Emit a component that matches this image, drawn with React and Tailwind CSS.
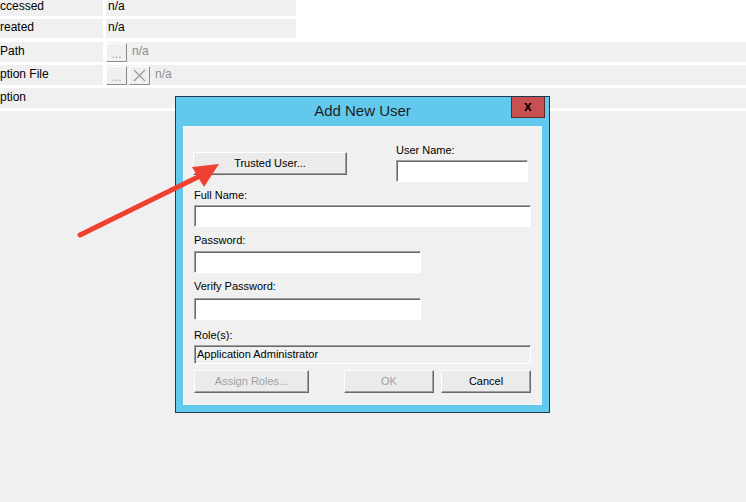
import React from 'react';

const font = { fontFamily: '"Liberation Sans", Arial, sans-serif' };

const SmallBtn = ({ children }) => (
  <div className="w-[21px] h-[19px] flex items-end justify-center bg-[#f0f0f0] border border-t-white border-l-white border-r-[#8c8c8c] border-b-[#8c8c8c] text-[#a0a0a0] text-[12px] leading-[14px]">
    {children}
  </div>
);

const Input = ({ w }) => (
  <div className={`${w} h-[22px] bg-white border border-t-[#a0a0a0] border-l-[#a0a0a0] border-r-white border-b-white shadow-[inset_1px_1px_0_#696969]`}></div>
);

const WinButton = ({ w, disabled, children }) => (
  <div
    className={`${w} h-[23px] flex items-center justify-center bg-[#ebebeb] border border-t-white border-l-white border-r-[#696969] border-b-[#696969] shadow-[inset_-1px_-1px_0_#a0a0a0] text-[11px] ${disabled ? 'text-[#a0a0a0]' : 'text-black'}`}
  >
    {children}
  </div>
);

const Label = ({ h, mt, children }) => (
  <div className={`${h} ${mt} text-[11px] leading-[12px] text-black`}>{children}</div>
);

export default function App() {
  return (
    <div className="relative w-[746px] h-[502px] bg-[#f0f0f0] overflow-hidden" style={font}>
      {/* property rows */}
      <div className="bg-white flex flex-col pb-[3px] text-[12px] text-black">
        <div className="h-[16px] flex">
          <div className="w-[103px] bg-[#f0f0f0] leading-[12px]">ccessed</div>
          <div className="ml-[3px] w-[190px] bg-[#f0f0f0] pl-[2px] leading-[12px]">n/a</div>
        </div>
        <div className="h-[19px] mt-[3px] flex">
          <div className="w-[103px] bg-[#f0f0f0] flex items-center pb-[3px]">reated</div>
          <div className="ml-[3px] w-[190px] bg-[#f0f0f0] pl-[2px] flex items-center pb-[3px]">n/a</div>
        </div>
        <div className="h-[20px] mt-[4px] flex">
          <div className="w-[103px] bg-[#f0f0f0] flex items-center pb-[3px]">Path</div>
          <div className="ml-[3px] flex-1 bg-[#f0f0f0] flex items-center">
            <SmallBtn>...</SmallBtn>
            <span className="ml-[5px] mb-[3px] text-[#8c8c8c]">n/a</span>
          </div>
        </div>
        <div className="h-[20px] mt-[3px] flex">
          <div className="w-[103px] bg-[#f0f0f0] flex items-center pb-[3px]">ption File</div>
          <div className="ml-[3px] flex-1 bg-[#f0f0f0] flex items-center">
            <SmallBtn>...</SmallBtn>
            <div className="ml-[2px] w-[21px] h-[19px] flex items-center justify-center bg-[#f0f0f0] border border-t-white border-l-white border-r-[#8c8c8c] border-b-[#8c8c8c]">
              <svg width="13" height="13" viewBox="0 0 13 13">
                <path d="M1 1 L12 12 M12 1 L1 12" stroke="#9a9a9a" strokeWidth="1.2" />
              </svg>
            </div>
            <span className="ml-[5px] mb-[3px] text-[#8c8c8c]">n/a</span>
          </div>
        </div>
        <div className="h-[20px] mt-[3px] flex bg-[#f0f0f0]">
          <div className="w-[103px] flex items-center pb-[3px]">ption</div>
        </div>
      </div>

      {/* dialog window */}
      <div className="absolute left-[175px] top-[96px] w-[375px] h-[317px] border border-[#1d3a50] bg-[#63c9ec] flex flex-col">
        <div className="relative h-[29px] flex items-center justify-center text-[15px] text-[#1e1e1e]">
          Add New User
          <div className="absolute -top-[1px] right-[4px] w-[34px] h-[22px] bg-[#c75050] border border-[#5a2a2a] border-t-[#1d3a50] flex items-center justify-center text-[14px] font-bold text-black leading-none pb-[3px]">
            x
          </div>
        </div>
        <div className="mx-[7px] h-[279px] bg-[#f0f0f0] border border-[#f7f7f7] pl-[10px] pt-[17px]">
          <div className="flex">
            <div className="pt-[8px] -ml-[1px]">
              <WinButton w="w-[154px]">Trusted User...</WinButton>
            </div>
            <div className="ml-[49px] flex flex-col">
              <Label h="h-[16px]" mt="mt-0">User Name:</Label>
              <Input w="w-[132px]" />
            </div>
          </div>
          <Label h="h-[16px]" mt="mt-[7px]">Full Name:</Label>
          <Input w="w-[337px]" />
          <Label h="h-[17px]" mt="mt-[7px]">Password:</Label>
          <Input w="w-[227px]" />
          <Label h="h-[18px]" mt="mt-[7px]">Verify Password:</Label>
          <Input w="w-[227px]" />
          <Label h="h-[16px]" mt="mt-[9px]">Role(s):</Label>
          <div className="w-[337px] h-[19px] bg-[#f0f0f0] border border-t-[#a0a0a0] border-l-[#a0a0a0] border-r-white border-b-white shadow-[inset_1px_1px_0_#696969] pl-[2px] text-[11px] leading-[16px] text-black">
            Application Administrator
          </div>
          <div className="mt-[6px] flex">
            <WinButton w="w-[115px]" disabled>Assign Roles...</WinButton>
            <div className="ml-[35px]">
              <WinButton w="w-[90px]" disabled>OK</WinButton>
            </div>
            <div className="ml-[7px]">
              <WinButton w="w-[90px]">Cancel</WinButton>
            </div>
          </div>
        </div>
      </div>

      {/* annotation arrow */}
      <svg className="absolute left-0 top-0 pointer-events-none" width="746" height="502" viewBox="0 0 746 502">
        <line x1="80" y1="235" x2="200" y2="176" stroke="#ef4131" strokeWidth="5" strokeLinecap="round" />
        <polygon points="219,164 192,167 204,187" fill="#ef4131" />
      </svg>
    </div>
  );
}
